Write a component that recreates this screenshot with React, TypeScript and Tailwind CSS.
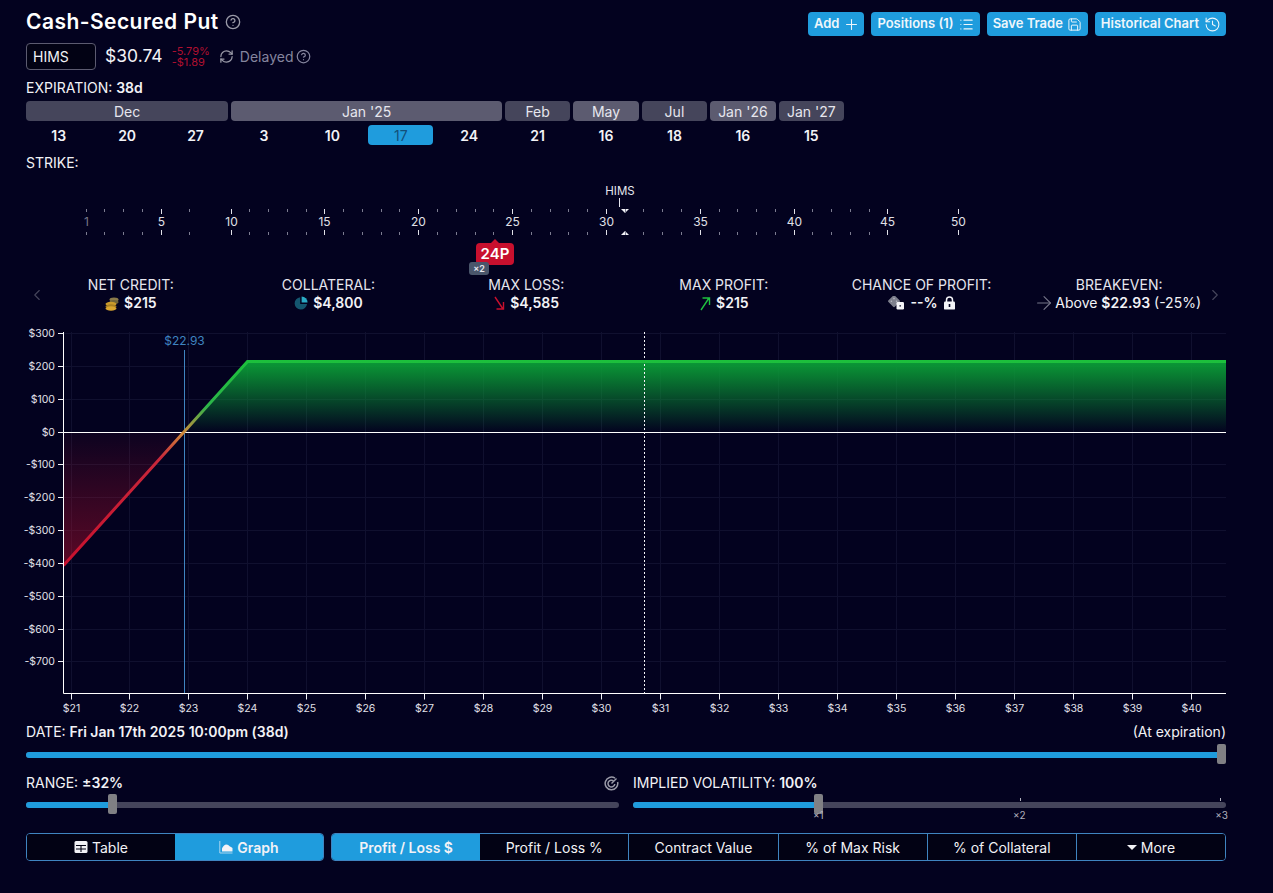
import { ArrowRight, ChevronLeft, ChevronRight, CircleHelp, History, List, Plus, RefreshCw, Save } from "lucide-react";
import type { ReactNode } from "react";

const months = [
  { label: "Dec", span: "col-span-3", tone: "bg-[#45455b]" },
  { label: "Jan '25", span: "col-span-4", tone: "bg-[#5c5b70]" },
  { label: "Feb", span: "col-span-1", tone: "bg-[#45455b]" },
  { label: "May", span: "col-span-1", tone: "bg-[#5c5b70]" },
  { label: "Jul", span: "col-span-1", tone: "bg-[#45455b]" },
  { label: "Jan '26", span: "col-span-1", tone: "bg-[#5c5b70]" },
  { label: "Jan '27", span: "col-span-1", tone: "bg-[#45455b]" },
];

const dates = [13, 20, 27, 3, 10, 17, 24, 21, 16, 18, 16, 15];

const topButtons = [
  { label: "Add", icon: <Plus size={17} strokeWidth={1.5} className="-ml-[1px] -mr-[2px]" /> },
  { label: "Positions (1)", icon: <List size={15} strokeWidth={1.8} /> },
  { label: "Save Trade", icon: <Save size={15} strokeWidth={1.6} className="-mx-[0.5px]" /> },
  { label: "Historical Chart", icon: <History size={17} strokeWidth={1.5} className="-mx-[0.5px]" /> },
];

// chart coordinates, snapped so 1px lines stay crisp
function x2px(v: number) {
  return Math.floor(45 + (v - 21) * 58.95) + 0.5;
}
function y2px(v: number) {
  return Math.floor(107 - (v / 100) * 32.85) + 0.5;
}

const strikeTicks: [number, number][] = [];
[1, 2, 3, 4].forEach((n, i) => strikeTicks.push([n, 86 + i * 18.8]));
strikeTicks.push([5, 161], [7.5, 189]);
for (let n = 10; n <= 45; n++) strikeTicks.push([n, 231 + (n - 10) * 18.77]);
strikeTicks.push([50, 958]);

function Coins() {
  return (
    <svg width="14" height="15" viewBox="0 0 14 15">
      <ellipse cx="9" cy="3.5" rx="4.5" ry="2" fill="#8a7a4a" />
      <ellipse cx="9" cy="6" rx="4.5" ry="2" fill="#6e6238" />
      <ellipse cx="6" cy="8" rx="5.5" ry="2.2" fill="#c99a2c" />
      <ellipse cx="6" cy="10.5" rx="5.5" ry="2.2" fill="#a87f22" />
      <ellipse cx="6" cy="12.5" rx="5.5" ry="2.2" fill="#d9a52f" />
    </svg>
  );
}

function Pie() {
  return (
    <svg width="14" height="14" viewBox="0 0 14 14">
      <path d="M6.2 1.2 A6.2 6.2 0 1 0 13 8 H6.2 Z" fill="#14566f" />
      <path d="M7.6 0.4 A6.2 6.2 0 0 1 13.6 6.6 H7.6 Z" fill="#2aa9c4" />
    </svg>
  );
}

function Dice() {
  return (
    <svg width="18" height="14" viewBox="0 0 18 14">
      <rect x="2.5" y="0.7" width="9" height="9" rx="1.2" transform="rotate(45 7 5.2)" fill="#7d7f8c" />
      <circle cx="7" cy="2.6" r="0.8" fill="#b8b8c4" />
      <circle cx="4.4" cy="5.2" r="0.8" fill="#b8b8c4" />
      <circle cx="9.6" cy="5.2" r="0.8" fill="#b8b8c4" />
      <rect x="9.5" y="6" width="7.5" height="7.5" rx="1.2" fill="#f4f4f8" />
      <circle cx="13.2" cy="9.8" r="0.9" fill="#34344a" />
    </svg>
  );
}

function LockIcon() {
  return (
    <svg width="13" height="14" viewBox="0 0 13 14">
      <path d="M3.5 6V4a3 3 0 0 1 6 0v2" fill="none" stroke="#f4f4f8" strokeWidth="1.5" />
      <rect x="1" y="5.6" width="11" height="8" rx="1.2" fill="#f4f4f8" />
      <rect x="5.7" y="8" width="1.6" height="3" fill="#03021f" />
    </svg>
  );
}

function LongArrow({ up, color }: { up?: boolean; color: string }) {
  return (
    <svg width="12" height="15" viewBox="0 0 12 15" fill="none" stroke={color} strokeWidth="1.4">
      {up ? (
        <path d="M2 14 L10 2 M3.5 2 H10.5 V9" />
      ) : (
        <path d="M2 1 L10 13 M3.5 13 H10.5 V6" />
      )}
    </svg>
  );
}

function TableIcon() {
  return (
    <svg width="14" height="14" viewBox="0 0 14 14">
      <rect x="0.5" y="1" width="13" height="12" rx="1.5" fill="#f2f2f6" />
      <path d="M2 5.5 H12 M2 9 H12 M7 5.5 V12" stroke="#020214" strokeWidth="1.1" />
    </svg>
  );
}

function GraphIcon() {
  return (
    <svg width="14" height="14" viewBox="0 0 14 14">
      <path d="M0.8 1 V13 H13.5" fill="none" stroke="#a9d6ef" strokeWidth="1" />
      <path d="M3 11.5 V8.5 C4 6.5 5 5 7 4.5 C9.5 4.5 10 6 11 6.5 C12 7 13 7.5 13.5 8 V11.5 Z" fill="#f2f2f6" />
    </svg>
  );
}

function RangeTarget() {
  return (
    <svg width="15" height="15" viewBox="0 0 15 15" fill="none" stroke="#9a9aa8" strokeWidth="1.5">
      <path d="M11 2.2 A6.3 6.3 0 1 0 13.6 6" />
      <path d="M9.6 5 A3.4 3.4 0 1 0 10.8 8" />
      <path d="M7.5 7.5 L12.5 2.5" />
    </svg>
  );
}

function Stat({ label, children }: { label: string; children: ReactNode }) {
  return (
    <div className="flex flex-col items-center">
      <div className="text-[14px] leading-[18px] text-[#e6e6ee]">{label}</div>
      <div className="flex h-[18px] items-center gap-[5px] text-[14px] leading-[18px] text-[#f2f2f6]">{children}</div>
    </div>
  );
}

function StrikeRuler() {
  return (
    <div className="relative mt-[10px] h-[81px]">
      <svg className="block" width="1200" height="60" viewBox="0 0 1200 60">
        <g fontFamily="Inter, sans-serif" fontSize="12" textAnchor="middle">
          <text x="594" y="13" fill="#e6e6ee" fontSize="11.5">HIMS</text>
          <line x1="593.5" y1="16" x2="593.5" y2="25" stroke="#e6e6ee" />
          <polygon points="595,27 603,27 599,31" fill="#f2f2f6" />
          <polygon points="595,53 603,53 599,49" fill="#f2f2f6" />
          {strikeTicks.map(([n, px]) => {
            const x = Math.floor(px - 26) + 0.5;
            const major = n % 5 === 0;
            const dim = n === 1 ? "#77778a" : "#e0e0e8";
            return (
              <g key={n}>
                <line x1={x} x2={x} y1={27} y2={major ? 32 : 30} stroke={major ? "#e0e0e8" : "#7c7c90"} />
                <line x1={x} x2={x} y1={major ? 48 : 50} y2={53} stroke={major ? "#e0e0e8" : "#7c7c90"} />
                {(major || n === 1) && (
                  <text x={x} y="44" fill={dim}>
                    {n}
                  </text>
                )}
              </g>
            );
          })}
        </g>
      </svg>
      <div className="absolute left-[450px] top-[61px] flex h-[22px] w-[38px] items-center justify-center rounded-[4px] bg-[#c8102e] text-[15px] font-semibold text-white">
        <span className="absolute top-[-4px] left-[15px] h-0 w-0 border-x-[4px] border-b-[4px] border-x-transparent border-b-[#c8102e]" />
        24P
      </div>
      <div className="absolute left-[443px] top-[80px] flex h-[13px] w-[20px] items-center justify-center rounded-[3px] bg-[#4a566b] text-[9px] font-semibold text-[#e6e6ee]">
        ×2
      </div>
    </div>
  );
}

function Chart() {
  const yTicks = [300, 200, 100, 0, -100, -200, -300, -400, -500, -600, -700];
  const xTicks = Array.from({ length: 20 }, (_, i) => 21 + i);
  const axisX = 37.5;
  const bottom = 368.5;
  const right = 1200;
  const zero = y2px(0);
  const peak = y2px(215);
  const be = x2px(22.93);
  const peakX = x2px(24);
  const lossY = y2px(-407);
  return (
    <svg className="mt-[13px] block overflow-visible" width="1200" height="392" viewBox="0 0 1200 392">
      <defs>
        <linearGradient id="profitFill" x1="0" y1={peak} x2="0" y2={zero} gradientUnits="userSpaceOnUse">
          <stop offset="0" stopColor="#0a9a36" />
          <stop offset="1" stopColor="#0a9a36" stopOpacity="0" />
        </linearGradient>
        <linearGradient id="lossFill" x1="0" y1={zero} x2="0" y2={lossY} gradientUnits="userSpaceOnUse">
          <stop offset="0" stopColor="#c8102e" stopOpacity="0.05" />
          <stop offset="1" stopColor="#c8102e" stopOpacity="0.45" />
        </linearGradient>
        <linearGradient id="plLine" x1="0" y1={peak} x2="0" y2={lossY} gradientUnits="userSpaceOnUse">
          <stop offset="0" stopColor="#1cc03c" />
          <stop offset="0.22" stopColor="#2db54a" />
          <stop offset="0.35" stopColor="#d08a3a" />
          <stop offset="0.47" stopColor="#c8283a" />
          <stop offset="1" stopColor="#c8102e" />
        </linearGradient>
      </defs>
      <g stroke="#10102f" strokeWidth="1">
        {yTicks.map((v) => (
          <line key={v} x1={axisX} x2={right} y1={y2px(v)} y2={y2px(v)} />
        ))}
        {xTicks.map((v) => (
          <line key={v} x1={x2px(v)} x2={x2px(v)} y1={7} y2={bottom} />
        ))}
      </g>
      <polygon points={`${be},${zero} ${peakX},${peak} ${right},${peak} ${right},${zero}`} fill="url(#profitFill)" />
      <polygon points={`${axisX},${zero} ${be},${zero} ${axisX},${lossY}`} fill="url(#lossFill)" />
      <line x1={be} x2={be} y1={25} y2={bottom} stroke="#3f84c0" />
      <line x1={618.5} x2={618.5} y1={7} y2={bottom} stroke="#f2f2f6" strokeDasharray="2 2" />
      <line x1={axisX} x2={right} y1={zero} y2={zero} stroke="#ffffff" />
      <polyline
        points={`${axisX},${lossY} ${peakX},${peak} ${right},${peak}`}
        fill="none"
        stroke="url(#plLine)"
        strokeWidth="3"
      />
      <line x1={axisX} x2={axisX} y1={7} y2={bottom} stroke="#ffffff" />
      <line x1={axisX} x2={right} y1={bottom} y2={bottom} stroke="#ffffff" />
      <g fontFamily="Inter, sans-serif" fontSize="10.5" fill="#e0e0e8">
        <text x={be} y="20" fill="#3f84c0" fontSize="12" textAnchor="middle">
          $22.93
        </text>
        {yTicks.map((v) => (
          <g key={v}>
            <line x1={32} x2={axisX} y1={y2px(v)} y2={y2px(v)} stroke="#f2f2f6" />
            <text x="29" y={y2px(v) + 3.5} textAnchor="end">
              {v < 0 ? `-$${-v}` : `$${v}`}
            </text>
          </g>
        ))}
        {xTicks.map((v) => (
          <g key={v}>
            <line x1={x2px(v)} x2={x2px(v)} y1={bottom} y2={bottom + 6} stroke="#f2f2f6" />
            <text x={x2px(v)} y={bottom + 18} textAnchor="middle">
              ${v}
            </text>
          </g>
        ))}
      </g>
    </svg>
  );
}

function Slider({ pct, className }: { pct: number; className?: string }) {
  return (
    <div className={`relative h-[6px] rounded-full bg-[#45455b] ${className ?? ""}`}>
      <div className="h-full rounded-full bg-[#1f9cdd]" style={{ width: `${pct}%` }} />
      <div
        className="absolute top-[-8px] h-[20px] w-[9px] rounded-[2px] bg-[#808084]"
        style={{ left: `calc(${pct}% - ${pct === 100 ? 9 : 4}px)` }}
      />
    </div>
  );
}

export default function App() {
  return (
    <div
      className="h-[893px] overflow-hidden bg-[#03021f] pl-[26px] pr-[47px] text-[14px] text-[#f2f2f6]"
      style={{ fontFamily: "Inter, sans-serif" }}
    >
      <div className="flex h-[36px] items-end justify-between">
        <div className="flex items-center gap-[6px] pb-[1px]">
          <h1 className="text-[21px] font-semibold leading-[26px] tracking-[0.45px] text-white">Cash-Secured Put</h1>
          <CircleHelp size={16} className="text-[#9a9aa8]" />
        </div>
        <div className="flex gap-[7px]">
          {topButtons.map((b) => (
            <button
              key={b.label}
              className="flex h-[24px] items-center gap-[5px] rounded-[4px] bg-[#1f9cdd] px-[6px] text-[13px] font-semibold text-[#eef6fb]"
            >
              {b.label}
              {b.icon}
            </button>
          ))}
        </div>
      </div>

      <div className="mt-[7px] flex h-[27px] items-center">
        <div className="flex h-[27px] w-[70px] items-center rounded-[4px] border border-[#5c5b70] bg-[#020214] pl-[6px] text-[14px]">
          HIMS
        </div>
        <span className="ml-[9px] text-[17.5px] text-[#f2f2f6]">$30.74</span>
        <div className="ml-[9px] flex flex-col text-[11px] leading-[11px] text-[#b01030]">
          <span>-5.79%</span>
          <span>-$1.89</span>
        </div>
        <RefreshCw size={15} className="ml-[9px] text-[#9a9aa8]" />
        <span className="ml-[6px] text-[14px] text-[#85859e]">Delayed</span>
        <CircleHelp size={15} className="ml-[2px] text-[#85859e]" />
      </div>

      <div className="mt-[9px] h-[18px] leading-[18px]">
        EXPIRATION: <span className="font-semibold">38d</span>
      </div>

      <div className="mt-[4px] grid w-[818px] grid-cols-12 gap-x-[3px] gap-y-[4px]">
        {months.map((m) => (
          <div
            key={m.label}
            className={`flex h-[20px] items-center justify-center rounded-[4px] text-[14px] text-[#e6e6ee] ${m.span} ${m.tone}`}
          >
            {m.label}
          </div>
        ))}
        {dates.map((d, i) => (
          <div
            key={i}
            className={
              i === 5
                ? "flex h-[20px] items-center justify-center rounded-[4px] bg-[#1f9cdd] text-[14px] text-[#12507a]"
                : "flex h-[20px] items-center justify-center text-[14px] font-semibold text-[#f2f2f6]"
            }
          >
            {d}
          </div>
        ))}
      </div>

      <div className="mt-[9px] h-[18px] leading-[18px]">STRIKE:</div>

      <StrikeRuler />

      <div className="relative mt-[13px] grid h-[36px] grid-cols-6 pl-[6px] pr-[8px]">
        <ChevronLeft size={18} strokeWidth={1.5} className="absolute left-[2px] top-[10px] text-[#45455b]" />
        <ChevronRight size={18} strokeWidth={1.5} className="absolute right-[2px] top-[10px] text-[#45455b]" />
        <Stat label="NET CREDIT:">
          <Coins />
          <b className="font-semibold">$215</b>
        </Stat>
        <Stat label="COLLATERAL:">
          <Pie />
          <b className="font-semibold">$4,800</b>
        </Stat>
        <Stat label="MAX LOSS:">
          <LongArrow color="#c8102e" />
          <b className="font-semibold">$4,585</b>
        </Stat>
        <Stat label="MAX PROFIT:">
          <LongArrow up color="#1fc040" />
          <b className="font-semibold">$215</b>
        </Stat>
        <Stat label="CHANCE OF PROFIT:">
          <Dice />
          <b className="font-semibold">--%</b>
          <LockIcon />
        </Stat>
        <Stat label="BREAKEVEN:">
          <ArrowRight size={22} strokeWidth={1.2} className="-ml-[4px] -mr-[5px] text-[#77778a]" />
          <span className="whitespace-nowrap">
            Above <b className="font-semibold">$22.93</b> (-25%)
          </span>
        </Stat>
      </div>

      <Chart />

      <div className="mt-[6px] flex h-[18px] items-center justify-between leading-[18px]">
        <div>
          DATE: <span className="font-semibold">Fri Jan 17th 2025 10:00pm (38d)</span>
        </div>
        <div>(At expiration)</div>
      </div>
      <Slider pct={100} className="mt-[11px]" />

      <div className="mt-[16px] flex gap-[14px]">
        <div className="flex-1">
          <div className="flex h-[18px] items-center justify-between leading-[18px]">
            <div>
              RANGE: <span className="font-semibold">±32%</span>
            </div>
            <RangeTarget />
          </div>
          <Slider pct={14.5} className="mt-[10px]" />
        </div>
        <div className="flex-1">
          <div className="h-[18px] leading-[18px]">
            IMPLIED VOLATILITY: <span className="font-semibold">100%</span>
          </div>
          <div className="relative">
            <Slider pct={31.15} className="mt-[10px]" />
            <div className="absolute left-[387px] top-[-4px] h-[3px] w-px bg-[#b0b0bc]" />
            <div className="absolute right-[5px] top-[-4px] h-[3px] w-px bg-[#b0b0bc]" />
            <div className="absolute left-[180px] top-[7px] text-[10px] leading-[12px] text-[#b0b0bc]">×1</div>
            <div className="absolute left-[380px] top-[7px] text-[10px] leading-[12px] text-[#b0b0bc]">×2</div>
            <div className="absolute right-[-2px] top-[7px] text-[10px] leading-[12px] text-[#b0b0bc]">×3</div>
          </div>
        </div>
      </div>

      <div className="mt-[25px] flex gap-[7px]">
        <div className="flex h-[28px] w-[298px] overflow-hidden rounded-[4px] border border-[#3f84c0]">
          <div className="flex flex-1 items-center justify-center gap-[4px] bg-[#020214]">
            <TableIcon />
            Table
          </div>
          <div className="flex flex-1 items-center justify-center gap-[4px] bg-[#1f9cdd] font-semibold">
            <GraphIcon />
            Graph
          </div>
        </div>
        <div className="flex h-[28px] flex-1 overflow-hidden rounded-[4px] border border-[#3f84c0]">
          <div className="flex flex-1 items-center justify-center bg-[#1f9cdd] font-semibold">Profit / Loss $</div>
          <div className="flex flex-1 items-center justify-center bg-[#020214]">Profit / Loss %</div>
          <div className="flex flex-1 items-center justify-center border-l border-[#3f84c0] bg-[#020214]">Contract Value</div>
          <div className="flex flex-1 items-center justify-center border-l border-[#3f84c0] bg-[#020214]">% of Max Risk</div>
          <div className="flex flex-1 items-center justify-center border-l border-[#3f84c0] bg-[#020214]">% of Collateral</div>
          <div className="flex flex-1 items-center justify-center gap-[4px] border-l border-[#3f84c0] bg-[#020214]">
            <span className="h-0 w-0 border-x-[5px] border-t-[5px] border-x-transparent border-t-[#f2f2f6]" />
            More
          </div>
        </div>
      </div>
    </div>
  );
}
